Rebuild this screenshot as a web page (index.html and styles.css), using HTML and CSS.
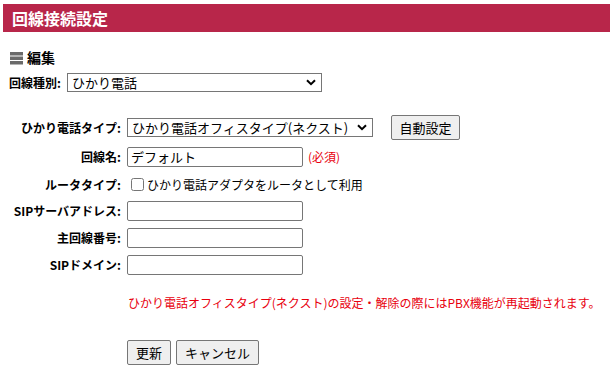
FILE: index.html
```html
<!DOCTYPE html>
<html lang="ja">
<head>
<meta charset="utf-8">
<link rel="stylesheet" href="styles.css">
</head>
<body>
<div class="page">
  <h1 class="title">回線接続設定</h1>
  <h2 class="section">
    <svg class="icon" width="13" height="13" viewBox="0 0 13 13">
      <rect x="0" y="0" width="13" height="3.5" fill="#6a6a6a"/>
      <rect x="0" y="4.5" width="13" height="3.5" fill="#6a6a6a"/>
      <rect x="0" y="9" width="13" height="3.5" fill="#6a6a6a"/>
    </svg>
    <span>編集</span>
  </h2>
  <div class="kind">
    <span class="lbl">回線種別:</span>
    <span class="selwrap">
      <select class="sel-kind"><option>ひかり電話</option></select>
      <svg class="chev" width="10" height="7" viewBox="0 0 10 7"><path d="M1 1.2 L5 5.2 L9 1.2" fill="none" stroke="#000" stroke-width="2"/></svg>
    </span>
  </div>
  <div class="form">
    <div class="lbl r">ひかり電話タイプ:</div>
    <div class="cell">
      <span class="selwrap">
        <select class="sel-type"><option>ひかり電話オフィスタイプ(ネクスト)</option></select>
        <svg class="chev" width="10" height="7" viewBox="0 0 10 7"><path d="M1 1.2 L5 5.2 L9 1.2" fill="none" stroke="#000" stroke-width="2"/></svg>
      </span>
      <button class="btn auto">自動設定</button>
    </div>
    <div class="lbl r">回線名:</div>
    <div class="cell"><input class="txt" type="text" value="デフォルト"><span class="req">(必須)</span></div>
    <div class="lbl r">ルータタイプ:</div>
    <div class="cell"><label class="chk"><input type="checkbox"><span>ひかり電話アダプタをルータとして利用</span></label></div>
    <div class="lbl r">SIPサーバアドレス:</div>
    <div class="cell"><input class="txt" type="text"></div>
    <div class="lbl r">主回線番号:</div>
    <div class="cell"><input class="txt" type="text"></div>
    <div class="lbl r">SIPドメイン:</div>
    <div class="cell"><input class="txt" type="text"></div>
  </div>
  <p class="note">ひかり電話オフィスタイプ(ネクスト)の設定・解除の際にはPBX機能が再起動されます。</p>
  <div class="actions">
    <button class="btn">更新</button>
    <button class="btn">キャンセル</button>
  </div>
</div>
</body>
</html>
```
FILE: styles.css
```css
* { box-sizing: border-box; }
body {
  margin: 0;
  background: #fff;
  font-family: "Noto Sans CJK JP", "Noto Sans", sans-serif;
  font-size: 12px;
  color: #000;
}
.page { padding: 4px 0 0 3px; }
.title {
  margin: 0;
  height: 28px;
  background: #b8264a;
  color: #fff;
  font-size: 16px;
  font-weight: bold;
  line-height: 28px;
  padding-left: 9px;
}
.section {
  margin: 16px 0 0 7px;
  display: flex;
  align-items: center;
  gap: 4px;
  font-size: 14px;
  font-weight: bold;
  height: 18px;
}
.icon { display: block; margin-top: 2px; }
.kind {
  margin: 7px 0 0 6px;
  display: flex;
  align-items: center;
  gap: 6px;
}
.lbl { font-weight: bold; font-size: 12px; }
select, input, button {
  font-family: "Noto Sans CJK JP", "Noto Sans", sans-serif;
  font-size: 13px;
}
.selwrap { position: relative; display: inline-flex; }
select {
  -webkit-appearance: none;
  appearance: none;
  height: 19px;
  border: 1px solid #767676;
  border-radius: 0;
  background: #fff;
  color: #000;
  padding: 0 20px 0 4px;
  line-height: 17px;
  margin: 0;
}
.chev { position: absolute; right: 6px; top: 6px; pointer-events: none; }
.sel-kind { width: 255px; }
.form {
  margin-top: 20px;
  display: grid;
  grid-template-columns: 118px auto;
  grid-template-rows: 30px 29px 26px 27px 27px 27px;
  column-gap: 6px;
}
.form > div { display: flex; align-items: center; }
.r { justify-content: flex-end; }
.sel-type { width: 246px; }
.btn {
  height: 25px;
  padding: 0 8px;
  border: 1px solid #767676;
  border-radius: 2px;
  background: #efefef;
  color: #000;
}
.auto { margin-left: 18px; width: 69px; padding: 0; }
.txt {
  width: 176px;
  height: 20px;
  border: 1px solid #767676;
  border-radius: 2px;
  padding: 0 3px;
  margin: 0;
}
.req { color: #e8000e; margin-left: 5px; font-size: 12px; }
.chk { display: flex; align-items: center; }
.chk input { margin: 0 3px 0 4px; width: 13px; height: 13px; }
.note {
  margin: 16px 0 0 125px;
  color: #e8000e;
  font-size: 12px;
}
.actions {
  margin: 29px 0 0 124px;
  display: flex;
  gap: 5px;
}
```
